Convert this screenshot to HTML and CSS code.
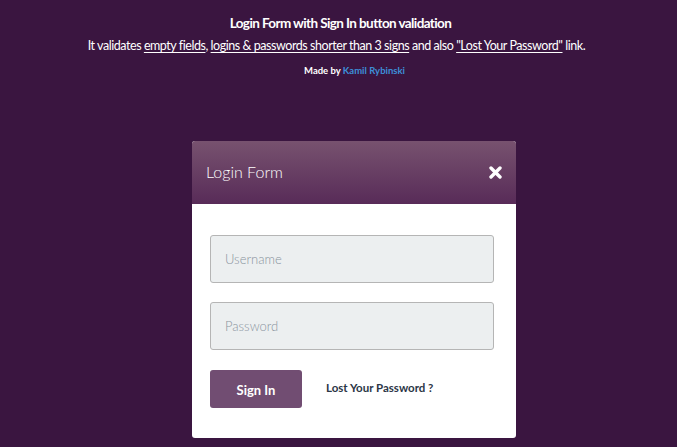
FILE: index.html
```html
<!DOCTYPE html>
<html>
<head>
<meta charset="utf-8">
<link rel="stylesheet" href="styles.css">
</head>
<body>
<header class="intro">
  <h1 class="intro-title">Login Form with Sign In button validation</h1>
  <p class="intro-text">It validates <u>empty fields</u>, <u>logins &amp; passwords shorter than 3 signs</u> and also <u>"Lost Your Password"</u> link.</p>
  <p class="intro-credit">Made by <span class="credit-link">Kamil Rybinski</span></p>
</header>
<div class="modal">
  <div class="modal-head">
    <span class="modal-title">Login Form</span>
    <svg class="close-icon" width="13" height="13" viewBox="0 0 13 13">
      <path d="M2 2 L11 11 M11 2 L2 11" stroke="#fff" stroke-width="3.4" stroke-linecap="round"/>
    </svg>
  </div>
  <div class="modal-body">
    <div class="field"><span class="placeholder">Username</span></div>
    <div class="field"><span class="placeholder">Password</span></div>
    <div class="actions">
      <div class="btn">Sign In</div>
      <span class="lost">Lost Your Password ?</span>
    </div>
  </div>
</div>
</body>
</html>
```
FILE: styles.css
```css
html, body {
  margin: 0;
  padding: 0;
}
body {
  background: #3a1540;
  font-family: Lato, "Liberation Sans", sans-serif;
  color: #fff;
  height: 447px;
  overflow: hidden;
}
.intro {
  text-align: center;
  padding-top: 14px;
}
.intro-title {
  margin: 0;
  padding-left: 4px;
  font-size: 13.5px;
  font-weight: 700;
  line-height: 18px;
  letter-spacing: -0.6px;
}
.intro-text {
  margin: 6px 0 0;
  font-size: 12.5px;
  line-height: 16px;
  letter-spacing: -0.45px;
  padding-right: 4px;
}
.intro-text u {
  text-decoration-thickness: 1px;
  text-underline-offset: 2px;
}
.intro-credit {
  margin: 11px 0 0;
  padding-left: 32px;
  font-size: 9.5px;
  font-weight: 700;
  line-height: 12px;
}
.credit-link {
  color: #3d8fd8;
}
.modal {
  width: 324px;
  margin: 64px 0 0 192px;
  background: #fff;
  border-radius: 3px;
}
.modal-head {
  height: 63px;
  display: flex;
  align-items: center;
  justify-content: space-between;
  padding: 0 14px 0 14px;
  background: linear-gradient(#77526f, #582b58);
  border-radius: 3px 3px 0 0;
}
.modal-title {
  font-size: 16px;
  font-weight: 300;
  color: #fff;
  margin-top: -2px;
}
.close-icon {
  display: block;
}
.modal-body {
  padding: 31px 0 30px 18px;
}
.field {
  width: 282px;
  height: 46px;
  background: #eceff0;
  border: 1px solid #b5b5b5;
  border-radius: 3px;
  display: flex;
  align-items: center;
  margin-bottom: 19px;
}
.field + .field {
  margin-bottom: 20px;
}
.placeholder {
  margin-left: 14px;
  font-size: 13px;
  font-weight: 300;
  color: #8a949e;
}
.actions {
  display: flex;
  align-items: center;
}
.btn {
  width: 92px;
  height: 38px;
  background: #714d72;
  border-radius: 3px;
  color: #fff;
  font-size: 13px;
  font-weight: 700;
  display: flex;
  align-items: center;
  justify-content: center;
  padding-top: 2px;
  box-sizing: border-box;
}
.lost {
  margin-left: 24px;
  margin-top: -3px;
  font-size: 11.5px;
  font-weight: 700;
  color: #2b3646;
}
```
